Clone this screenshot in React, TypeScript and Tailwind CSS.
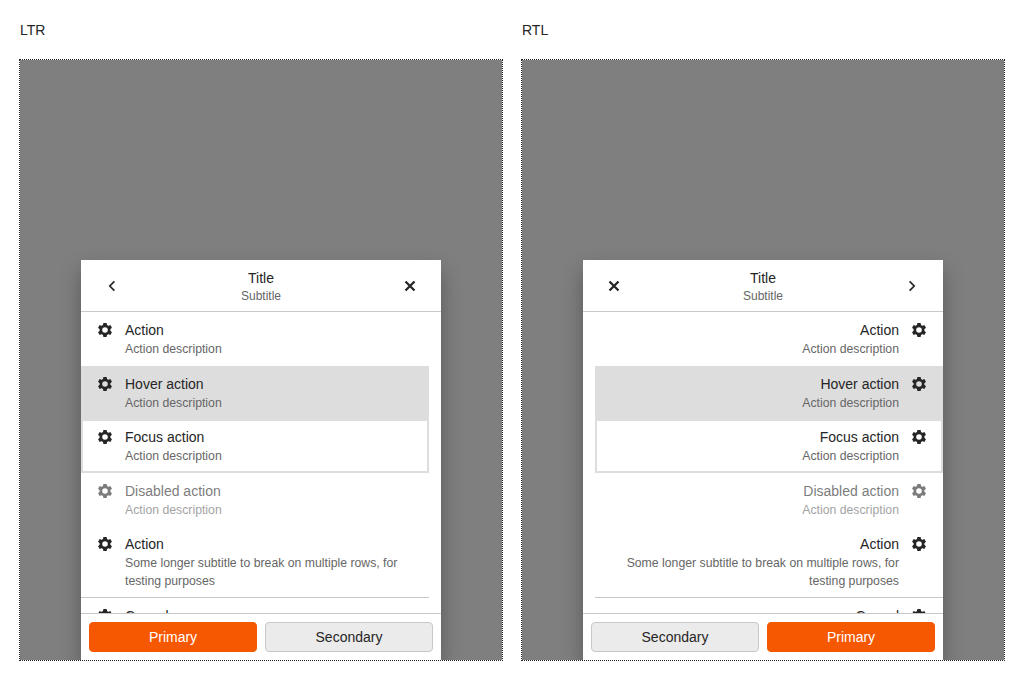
import React from "react";

type RowState = "default" | "hover" | "focus" | "disabled";

interface Action {
  title: string;
  description: string;
  state?: RowState;
  divider?: boolean;
}

const actions: Action[] = [
  { title: "Action", description: "Action description" },
  { title: "Hover action", description: "Action description", state: "hover" },
  { title: "Focus action", description: "Action description", state: "focus" },
  { title: "Disabled action", description: "Action description", state: "disabled" },
  {
    title: "Action",
    description: "Some longer subtitle to break on multiple rows, for testing purposes",
    divider: true,
  },
  { title: "Cancel", description: "Action description" },
];

function rowClass(state?: RowState) {
  if (state === "hover") return "bg-[#dddddd]";
  if (state === "focus") return "shadow-[inset_0_0_0_2px_#dddddd]";
  return "";
}

function Gear() {
  return (
    <svg viewBox="-8 -8 16 16" className="size-4 shrink-0" fill="none" stroke="#252525">
      <circle r="4.1" strokeWidth="2.6" />
      {[0, 60, 120, 180, 240, 300].map((angle) => (
        <path key={angle} d="M-2.1 -4.6 -1.6 -7.1h3.2L2.1 -4.6z" fill="#252525" stroke="none" transform={`rotate(${angle})`} />
      ))}
    </svg>
  );
}

function ActionRow({ title, description, state, divider }: Action) {
  const disabled = state === "disabled";
  return (
    <li
      className={`flex shrink-0 items-start gap-3 px-4 pt-2 ${rowClass(state)} ${
        divider ? "border-b border-[#c8c8c8] pb-[6.5px]" : "pb-[7.5px]"
      }`}
    >
      <span className={`mt-[2px] flex shrink-0 ${disabled ? "opacity-60" : ""}`}>
        <Gear />
      </span>
      <div className={`min-w-0 flex-1 ${disabled ? "opacity-60" : ""}`}>
        <div className="text-[14px] leading-5">{title}</div>
        <div className="text-[12.25px] leading-[18px] text-[#666666]">{description}</div>
      </div>
    </li>
  );
}

function Back() {
  return (
    <svg viewBox="0 0 16 16" className="size-4 rtl:-scale-x-100" fill="none" stroke="#252525" strokeWidth="1.7">
      <path d="M10.4 3.4 5.8 8l4.6 4.6" />
    </svg>
  );
}

function Close() {
  return (
    <svg viewBox="0 0 16 16" className="size-4" fill="none" stroke="#252525" strokeWidth="2.3">
      <path d="m3.5 3.5 9 9M12.5 3.5l-9 9" />
    </svg>
  );
}

function Demo({ dir }: { dir: "ltr" | "rtl" }) {
  return (
    <section className="flex w-[484px] flex-col">
      <h2 className="mb-[19px] px-px text-[14px] leading-5">{dir.toUpperCase()}</h2>
      <div
        dir={dir}
        className="flex h-[602px] items-end justify-center overflow-hidden border border-dotted border-[#252525] bg-[#7f7f7f] bg-clip-padding"
      >
        <div className="flex h-[400px] w-[360px] flex-col bg-white shadow-[0_10px_20px_rgba(0,0,0,0.3)]">
          <header className="flex h-[52px] shrink-0 items-center justify-between border-b border-[#c8c8c8] px-[23px]">
            <button type="button" aria-label="Back">
              <Back />
            </button>
            <div className="pt-[2px] text-center">
              <div className="text-[14px] leading-[18px]">Title</div>
              <div className="text-xs leading-[18px] text-[#666666]">Subtitle</div>
            </div>
            <button type="button" aria-label="Close">
              <Close />
            </button>
          </header>
          <ul className="me-3 flex min-h-0 flex-1 flex-col overflow-hidden">
            {actions.map((action, i) => (
              <ActionRow key={i} {...action} />
            ))}
          </ul>
          <footer className="flex shrink-0 gap-2 border-t border-[#c8c8c8] p-2">
            <button
              type="button"
              className="h-[30px] flex-1 rounded-[4px] border border-[#f55800] bg-[#f55800] text-[14px] leading-5 text-white"
            >
              Primary
            </button>
            <button
              type="button"
              className="h-[30px] flex-1 rounded-[4px] border border-[#c8c8c8] bg-[#ebebeb] text-[14px] leading-5"
            >
              Secondary
            </button>
          </footer>
        </div>
      </div>
    </section>
  );
}

export default function App() {
  return (
    <main className="flex h-[680px] gap-[18px] bg-white pt-5 pl-[19px] font-['Liberation_Sans',Arial,sans-serif] text-[#252525]">
      <Demo dir="ltr" />
      <Demo dir="rtl" />
    </main>
  );
}
